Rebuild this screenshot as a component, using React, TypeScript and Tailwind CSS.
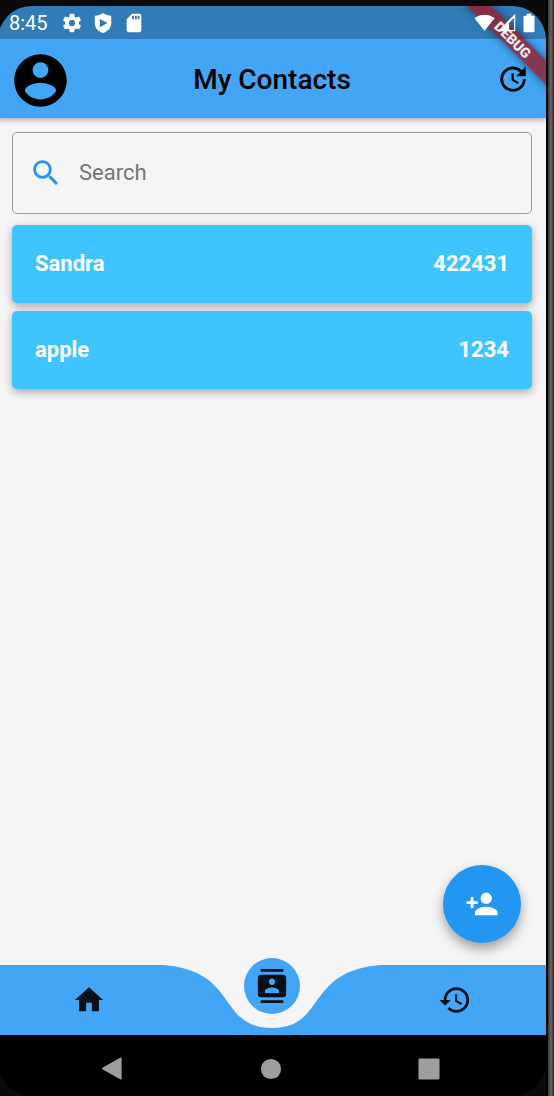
import { useState } from "react";

type IconProps = { d: string; className?: string };

function Icon({ d, className }: IconProps) {
  return (
    <svg viewBox="0 0 24 24" fill="currentColor" fillRule="evenodd" aria-hidden="true" className={className}>
      <path d={d} />
    </svg>
  );
}

const paths = {
  account:
    "M12 2C6.48 2 2 6.48 2 12s4.48 10 10 10 10-4.48 10-10S17.52 2 12 2zm0 3c1.66 0 3 1.34 3 3s-1.34 3-3 3-3-1.34-3-3 1.34-3 3-3zm0 14.2c-2.5 0-4.71-1.28-6-3.22.03-1.99 4-3.08 6-3.08 1.99 0 5.97 1.09 6 3.08-1.29 1.94-3.5 3.22-6 3.22z",
  update:
    "M21 10.12h-6.78l2.74-2.82c-2.73-2.7-7.15-2.8-9.88-.1-2.73 2.71-2.73 7.08 0 9.79s7.15 2.71 9.88 0C18.32 15.65 19 14.08 19 12.1h2c0 1.98-.88 4.55-2.64 6.29-3.51 3.48-9.21 3.48-12.72 0-3.5-3.47-3.53-9.11-.02-12.58s9.14-3.47 12.65 0L21 3v7.12zM12.5 8v4.25l3.5 2.08-.72 1.21L11 13V8h1.5z",
  search:
    "M15.5 14h-.79l-.28-.27C15.41 12.59 16 11.11 16 9.5 16 5.91 13.09 3 9.5 3S3 5.91 3 9.5 5.91 16 9.5 16c1.61 0 3.09-.59 4.23-1.57l.27.28v.79l5 4.99L20.49 19l-4.99-5zm-6 0C7.01 14 5 11.99 5 9.5S7.01 5 9.5 5 14 7.01 14 9.5 11.99 14 9.5 14z",
  personAdd:
    "M15 12c2.21 0 4-1.79 4-4s-1.79-4-4-4-4 1.79-4 4 1.79 4 4 4zm-9-2V7H4v3H1v2h3v3h2v-3h3v-2H6zm9 4c-2.67 0-8 1.34-8 4v2h16v-2c0-2.66-5.33-4-8-4z",
  home: "M10 20v-6h4v6h5v-8h3L12 3 2 12h3v8z",
  contacts:
    "M20 0H4v2h16V0zM4 24h16v-2H4v2zM20 4H4c-1.1 0-2 .9-2 2v12c0 1.1.9 2 2 2h16c1.1 0 2-.9 2-2V6c0-1.1-.9-2-2-2zm-8 2.75c1.24 0 2.25 1.01 2.25 2.25s-1.01 2.25-2.25 2.25S9.75 10.24 9.75 9 10.76 6.75 12 6.75zM17 17H7v-1.5c0-1.67 3.33-2.5 5-2.5s5 .83 5 2.5V17z",
  history:
    "M13 3c-4.97 0-9 4.03-9 9H1l3.89 3.89.07.14L9 12H6c0-3.87 3.13-7 7-7s7 3.13 7 7-3.13 7-7 7c-1.93 0-3.68-.79-4.94-2.06l-1.42 1.42C8.27 19.99 10.51 21 13 21c4.97 0 9-4.03 9-9s-4.03-9-9-9zm-1 5v5l4.28 2.54.72-1.21-3.5-2.08V8H12z",
  settings:
    "M19.43 12.98c.04-.32.07-.64.07-.98s-.03-.66-.07-.98l2.11-1.65c.19-.15.24-.42.12-.64l-2-3.46c-.12-.22-.39-.3-.61-.22l-2.49 1c-.52-.4-1.08-.73-1.69-.98l-.38-2.65C14.46 2.18 14.25 2 14 2h-4c-.25 0-.46.18-.49.42l-.38 2.65c-.61.25-1.17.59-1.69.98l-2.49-1c-.23-.09-.49 0-.61.22l-2 3.46c-.13.22-.07.49.12.64l2.11 1.65c-.04.32-.07.65-.07.98s.03.66.07.98l-2.11 1.65c-.19.15-.24.42-.12.64l2 3.46c.12.22.39.3.61.22l2.49-1c.52.4 1.08.73 1.69.98l.38 2.65c.03.24.24.42.49.42h4c.25 0 .46-.18.49-.42l.38-2.65c.61-.25 1.17-.59 1.69-.98l2.49 1c.23.09.49 0 .61-.22l2-3.46c.12-.22.07-.49-.12-.64l-2.11-1.65zM12 15.5c-1.93 0-3.5-1.57-3.5-3.5s1.57-3.5 3.5-3.5 3.5 1.57 3.5 3.5-1.57 3.5-3.5 3.5z",
  shield:
    "M12 1C10 2.4 6.5 4 3 4.2V12c0 5.5 3.8 9.4 9 11 5.2-1.6 9-5.5 9-11V4.2C17.5 4 14 2.4 12 1zM8.5 7.5L17 12l-8.500 4.500z",
  sdCard:
    "M18 2h-8L4 8v12c0 1.100.9 2 2 2h12c1.100 0 2-.9 2-2V4c0-1.100-.9-2-2-2zm-6 6h-2V4h2v4zm3 0h-2V4h2v4zm3 0h-2V4h2v4z",
  wifi: "M12 21.500L23.600 7C23.200 6.700 18.700 3 12 3S.8 6.700.4 7L12 21.500z",
  signal: "M22 2L2 22h20V2zM20.700 6.500v14h-5.700v-8.300z",
  battery:
    "M16.700 4H14.500V2h-5v2H7.300C6.600 4 6 4.600 6 5.300v15.300C6 21.400 6.600 22 7.300 22h9.300c.8 0 1.400-.6 1.400-1.300V5.300C18 4.600 17.400 4 16.700 4z",
};

const contacts = [
  { name: "Sandra", phone: "422431" },
  { name: "apple", phone: "1234" },
];

function DebugRibbon() {
  return (
    <div className="pointer-events-none absolute top-[25px] -right-[27px] z-10 flex h-[17px] w-[120px] rotate-45 items-center justify-center bg-[#9c1420]/75 text-[14px] leading-none font-black text-white/90 shadow-[0_0_8px_rgba(0,0,0,0.5)]">
      DEBUG
    </div>
  );
}

function StatusBar() {
  return (
    <div className="flex h-[33px] items-center bg-black/25 pr-1.5 pl-[11px] text-white">
      <span className="w-[52px] text-[20px] leading-6">8:45</span>
      <div className="flex flex-1 items-center gap-[9px]">
        <Icon d={paths.settings} className="size-[22px]" />
        <Icon d={paths.shield} className="size-[22px]" />
        <Icon d={paths.sdCard} className="size-[22px]" />
      </div>
      <div className="relative z-20 flex items-center gap-px">
        <Icon d={paths.wifi} className="size-[21px]" />
        <Icon d={paths.signal} className="size-[21px]" />
        <Icon d={paths.battery} className="size-[22px]" />
      </div>
    </div>
  );
}

function Header() {
  return (
    <header className="relative z-10 bg-[#42a5f5] shadow-[0_2px_5px_rgba(0,0,0,0.3)]">
      <StatusBar />
      <div className="grid h-[79px] grid-cols-[1fr_auto_1fr] items-center px-4">
        <button type="button" aria-label="Account" className="-ml-[5px] justify-self-start pt-1">
          <Icon d={paths.account} className="size-[63px]" />
        </button>
        <h1 className="pt-0.5 text-[28px] leading-8 font-medium">My Contacts</h1>
        <button type="button" aria-label="Refresh" className="justify-self-end">
          <Icon d={paths.update} className="size-[34px]" />
        </button>
      </div>
      <DebugRibbon />
    </header>
  );
}

function BottomNav() {
  return (
    <nav className="relative h-[70px] bg-[#f5f5f5]">
      <svg viewBox="0 0 548 70" preserveAspectRatio="none" aria-hidden="true" className="absolute inset-0 size-full">
        <path
          fill="#42a5f5"
          d="M0 0H164.400C241.100 5.250 219.200 63 274 63C328.800 63 306.900 5.250 383.600 0H548V70H0z"
        />
      </svg>
      <div className="relative grid h-full grid-cols-3 justify-items-center text-black/90">
        <a href="#home" aria-label="Home" className="self-center">
          <Icon d={paths.home} className="size-[34px]" />
        </a>
        <a
          href="#contacts"
          aria-label="Contacts"
          className="-mt-[7px] flex size-14 items-center justify-center rounded-full bg-[#42a5f5]"
        >
          <Icon d={paths.contacts} className="size-[34px]" />
        </a>
        <a href="#history" aria-label="History" className="self-center">
          <Icon d={paths.history} className="size-[34px]" />
        </a>
      </div>
    </nav>
  );
}

function SystemNav() {
  return (
    <div className="flex h-[61px] items-center justify-center gap-[136px] rounded-b-[34px] bg-black pt-1.5 pr-[3px] text-[#9e9e9e]">
      <button type="button" aria-label="Back">
        <Icon
          d="M21.500 1.200V22.800Q21.500 24 20.400 23.400L1.500 12.700Q.5 12 1.500 11.300L20.400 .6Q21.500 0 21.500 1.200z"
          className="size-[23px]"
        />
      </button>
      <button type="button" aria-label="Home screen">
        <Icon d="M12 1a11 11 0 100 22 11 11 0 000-22z" className="size-[22px]" />
      </button>
      <button type="button" aria-label="Recent apps">
        <Icon
          d="M2 .5H22Q23.500.5 23.500 2V22Q23.500 23.500 22 23.500H2Q.5 23.500.5 22V2Q.5.5 2 .5z"
          className="size-[22px]"
        />
      </button>
    </div>
  );
}

export default function App() {
  const [query, setQuery] = useState("");
  const visible = contacts.filter((c) => c.name.toLowerCase().includes(query.toLowerCase()));

  return (
    <div className="flex min-h-screen overflow-hidden bg-[#0a0a0a] font-[Roboto,sans-serif] text-black">
      <div className="-ml-0.5 flex flex-1 flex-col pt-1.5">
        <div className="flex flex-1 flex-col overflow-hidden rounded-t-[34px]">
          <Header />
          <main className="flex flex-1 flex-col bg-[#f5f5f5] px-3.5 pt-3.5">
            <label className="mb-[11px] flex h-[82px] items-center gap-4 rounded-[5px] border border-[#9a9a9a] px-4">
              <Icon d={paths.search} className="size-[34px] shrink-0 text-[#2196f3]" />
              <input
                type="text"
                aria-label="Search"
                placeholder="Search"
                value={query}
                onChange={(e) => setQuery(e.target.value)}
                className="min-w-0 flex-1 bg-transparent text-[22px] leading-7 outline-none placeholder:text-[#757575]"
              />
            </label>
            <ul className="flex flex-col gap-2">
              {visible.map((c) => (
                <li
                  key={c.name}
                  className="flex h-[78px] items-center justify-between rounded-[5px] bg-[#40c4ff] px-[23px] text-[22px] leading-7 font-bold text-white shadow-[0_3px_8px_rgba(0,0,0,0.33)]"
                >
                  <span>{c.name}</span>
                  <span>{c.phone}</span>
                </li>
              ))}
            </ul>
            <button
              type="button"
              aria-label="Add contact"
              className="mt-auto mr-[11px] mb-[22px] flex size-[78px] items-center justify-center self-end rounded-full bg-[#2196f3] text-white shadow-[0_6px_12px_rgba(0,0,0,0.35)]"
            >
              <Icon d={paths.personAdd} className="size-[34px]" />
            </button>
          </main>
          <BottomNav />
          <SystemNav />
        </div>
      </div>
      <div className="w-2 border-l-2 border-black bg-linear-to-r from-[#333] via-[#6b696b] to-[#222]" />
    </div>
  );
}
